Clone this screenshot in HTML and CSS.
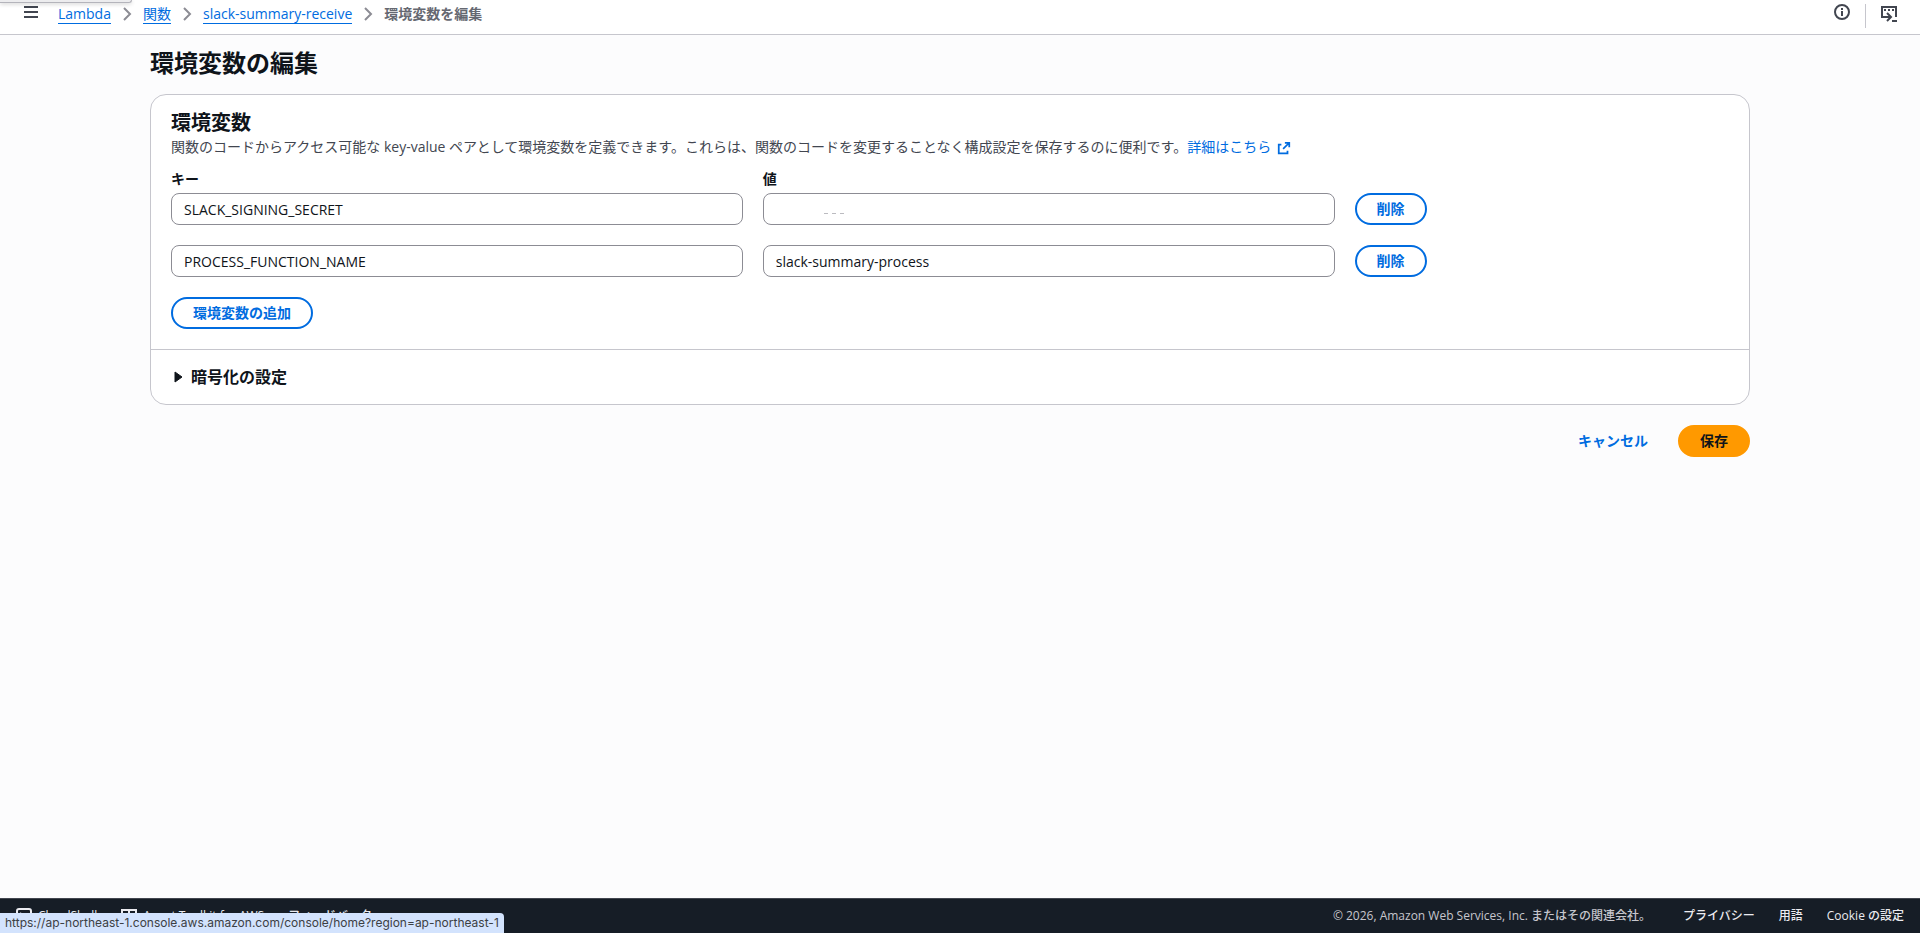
FILE: index.html
```html
<!DOCTYPE html>
<html lang="ja">
<head>
  <meta charset="UTF-8">
  <meta name="viewport" content="width=device-width, initial-scale=1.0">
  <link rel="stylesheet" href="styles.css">
  <title>環境変数を編集 | Lambda</title>
</head>
<body>

  <div class="popup-edge"></div>

  <header class="topbar">
    <button type="button" class="icon-btn" aria-label="メニュー">
      <svg width="16" height="16" viewBox="0 0 16 16"><path d="M1 3h14M1 8h14M1 13h14" /></svg>
    </button>
    <nav class="breadcrumb" aria-label="パンくずリスト">
      <a href="#">Lambda</a>
      <svg class="chevron" width="16" height="16" viewBox="0 0 16 16"><path d="M5 2l6 6-6 6" /></svg>
      <a href="#">関数</a>
      <svg class="chevron" width="16" height="16" viewBox="0 0 16 16"><path d="M5 2l6 6-6 6" /></svg>
      <a href="#">slack-summary-receive</a>
      <svg class="chevron" width="16" height="16" viewBox="0 0 16 16"><path d="M5 2l6 6-6 6" /></svg>
      <span class="current">環境変数を編集</span>
    </nav>
    <div class="tools">
      <button type="button" class="icon-btn" aria-label="情報">
        <svg width="16" height="16" viewBox="0 0 16 16"><circle cx="8" cy="8" r="7" /><path d="M8 12V7M8 6V4" /></svg>
      </button>
      <span class="divider"></span>
      <button type="button" class="icon-btn" aria-label="CloudShell">
        <svg width="16" height="18" viewBox="0 -2 16 18"><path d="M4 11H1V1h14v10M3 4h2M7 4h2M11 4h2M4 11h6M6 7l4 4-4 4M11 15h5" /></svg>
      </button>
    </div>
  </header>

  <main>
    <form class="content">
      <h1>環境変数の編集</h1>

      <section class="card">
        <div class="card-body">
          <h2>環境変数</h2>
          <p class="description">関数のコードからアクセス可能な key-value ペアとして環境変数を定義できます。これらは、関数のコードを変更することなく構成設定を保存するのに便利です。<a href="#">詳細はこちら <svg width="14" height="14" viewBox="0 0 16 16"><path d="M9 2h5v5M14 2L7 9M5 4H2v10h10v-3" /></svg></a></p>

          <div class="row labels">
            <label for="key1">キー</label>
            <label for="value1">値</label>
          </div>
          <div class="row">
            <input type="text" id="key1" value="SLACK_SIGNING_SECRET">
            <input type="text" id="value1" class="masked" value="">
            <button type="button" class="btn">削除</button>
          </div>
          <div class="row">
            <input type="text" aria-label="キー" value="PROCESS_FUNCTION_NAME">
            <input type="text" aria-label="値" value="slack-summary-process">
            <button type="button" class="btn">削除</button>
          </div>
          <button type="button" class="btn">環境変数の追加</button>
        </div>

        <details class="encryption">
          <summary>
            <svg width="16" height="16" viewBox="0 0 16 16"><path d="M4 3v10l7-5z" /></svg>
            暗号化の設定
          </summary>
        </details>
      </section>

      <div class="actions">
        <button type="button" class="btn link">キャンセル</button>
        <button type="submit" class="btn primary">保存</button>
      </div>
    </form>
  </main>

  <footer>
    <a href="#"><svg width="16" height="16" viewBox="0 0 16 16"><rect x="1" y="1" width="14" height="14" rx="2" /><path d="M4 5l3 3-3 3M8 11h4" /></svg>CloudShell</a>
    <a href="#"><svg width="16" height="16" viewBox="0 0 16 16"><path d="M1 2h14v12H1zM1 6h14M8 2v12" /></svg>Agent Toolkit for AWS</a>
    <a href="#">フィードバック</a>
    <span class="copyright">© 2026, Amazon Web Services, Inc. またはその関連会社。</span>
    <a href="#">プライバシー</a>
    <a href="#">用語</a>
    <a href="#">Cookie の設定</a>
  </footer>

  <div class="status">https://ap-northeast-1.console.aws.amazon.com/console/home?region=ap-northeast-1</div>

</body>
</html>
```
FILE: styles.css
```css
* {
  box-sizing: border-box;
}

body {
  margin: 0;
  min-height: 100vh;
  display: flex;
  flex-direction: column;
  font-family: "Open Sans", "Noto Sans CJK JP", sans-serif;
  font-size: 14px;
  line-height: 20px;
  color: #0f141a;
  background-color: #fcfcfd;
}

a {
  color: #006ce0;
  text-decoration: none;
}

svg {
  fill: none;
  stroke: currentColor;
  stroke-width: 2;
  flex-shrink: 0;
}

button,
input {
  font: inherit;
}

/* edge of the browser menu over the page */
.popup-edge {
  position: absolute;
  top: 0;
  left: 0;
  width: 132px;
  height: 3px;
  background-color: #ececee;
  border: 1px solid #b4b4bb;
  border-width: 0 1px 1px 0;
  border-radius: 0 0 4px 0;
  box-shadow: 0 1px 4px rgba(0, 0, 0, 0.2);
}

.topbar {
  display: flex;
  align-items: flex-start;
  height: 35px;
  padding: 4px 23px 0;
  background-color: #fff;
  border-bottom: 1px solid #c6c6cd;
}

.icon-btn {
  display: flex;
  padding: 0;
  border: none;
  background: none;
  color: #424650;
}

.breadcrumb {
  display: flex;
  align-items: center;
  gap: 8px;
  margin-left: 19px;
}

.breadcrumb a {
  line-height: 19px;
  border-bottom: 1px solid #006ce0;
}

.chevron {
  color: #8c8c94;
}

.current {
  color: #656871;
  font-weight: 700;
}

.tools {
  display: flex;
  margin-left: auto;
  gap: 15px;
}

.divider {
  width: 1px;
  height: 24px;
  background-color: #c6c6cd;
}

main {
  flex: 1;
  padding: 12px 20px 20px 0;
}

.content {
  max-width: 1600px;
  margin: 0 auto;
}

h1 {
  margin: 0 0 16px;
  font-size: 24px;
  line-height: 31px;
}

.card {
  background-color: #fff;
  border: 1px solid #c6c6cd;
  border-radius: 16px;
}

.card-body {
  padding: 16px 20px 20px;
}

h2 {
  margin: 0 0 2px;
  font-size: 20px;
  line-height: 24px;
}

.description {
  margin: 0 0 12px;
  color: #424650;
}

.description svg {
  margin-left: 2px;
  vertical-align: -3px;
}

.row {
  display: grid;
  grid-template-columns: repeat(8, 1fr);
  gap: 20px;
  margin-bottom: 20px;
}

.row label,
.row input {
  grid-column: span 3;
}

.row .btn {
  grid-column: span 2;
  justify-self: start;
}

.labels {
  margin-bottom: 4px;
  font-weight: 700;
}

input {
  width: 100%;
  height: 32px;
  padding: 4px 12px;
  color: #0f141a;
  background-color: #fff;
  border: 1px solid #8c8c94;
  border-radius: 8px;
}

/* only the lower edge of the value stays visible */
.masked {
  background-image: repeating-linear-gradient(to right, #bbbbc0 0 4px, #fff 4px 8px);
  background-position: 60px 19px;
  background-size: 20px 1px;
  background-repeat: no-repeat;
}

.btn {
  height: 32px;
  padding: 0 20px;
  color: #006ce0;
  font-weight: 700;
  background-color: #fff;
  border: 2px solid #006ce0;
  border-radius: 20px;
}

.encryption {
  border-top: 1px solid #c6c6cd;
}

summary {
  display: flex;
  align-items: center;
  gap: 4px;
  padding: 15px 20px;
  font-size: 16px;
  font-weight: 700;
  line-height: 24px;
  list-style: none;
}

summary svg {
  fill: currentColor;
  stroke-width: 1;
  stroke-linejoin: round;
}

.actions {
  display: flex;
  justify-content: flex-end;
  gap: 8px;
  margin-top: 20px;
}

.link {
  background: none;
  border-color: transparent;
}

.primary {
  color: #0f141a;
  background-color: #ff9900;
  border-color: #ff9900;
}

footer {
  display: flex;
  align-items: center;
  gap: 24px;
  height: 35px;
  padding: 0 16px;
  font-size: 12px;
  line-height: 16px;
  color: #c6c6cd;
  background-color: #161d26;
  border-top: 1px solid #424650;
}

footer a {
  display: flex;
  align-items: center;
  gap: 6px;
  color: #ebebf0;
  font-weight: 500;
}

.copyright {
  margin-left: auto;
  margin-right: 8px;
  font-weight: 500;
}

/* link target shown by the browser */
.status {
  position: fixed;
  left: 0;
  bottom: 0;
  padding: 0 5px;
  font-family: Inter, sans-serif;
  font-size: 12px;
  color: #3c4043;
  background-color: #d3e3fd;
  border-radius: 0 4px 0 0;
}
```
